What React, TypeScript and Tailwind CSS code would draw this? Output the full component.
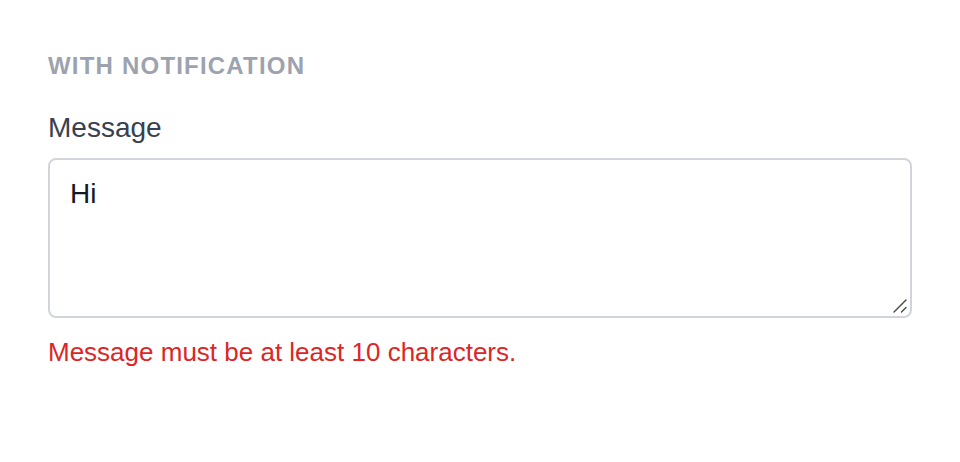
import { useState } from 'react';

export default function App() {
  const [message, setMessage] = useState('Hi');
  const tooShort = message.trim().length < 10;

  return (
    <div className="min-h-screen bg-white px-12 pt-[50px] font-['Liberation_Sans',Arial,sans-serif]">
      <h2 className="text-[24px] font-bold uppercase leading-[32px] tracking-[0.05em] text-[#9ca3af]">
        With notification
      </h2>

      <label htmlFor="message" className="mt-[28px] block text-[28px] leading-[36px] text-[#374151]">
        Message
      </label>
      <div className="relative mt-[12px]">
        <textarea
          id="message"
          value={message}
          onChange={(e) => setMessage(e.target.value)}
          className="block h-[160px] w-full resize-none rounded-[8px] border-2 border-[#d1d5db] px-5 py-[14px] text-[28px] leading-[40px] text-[#111827] outline-none"
        />
        {/* resize grip */}
        <svg
          className="pointer-events-none absolute bottom-[4px] right-[4px] h-[16px] w-[16px]"
          viewBox="0 0 16 16"
          fill="none"
          stroke="#4b4b4b"
          strokeWidth={1.5}
          strokeLinecap="round"
        >
          <path d="M2 14L14 2" />
          <path d="M9.5 14L14 9.5" />
        </svg>
      </div>

      {tooShort && (
        <p className="mt-[16px] text-[26px] leading-[36px] text-[#dc2626]">
          Message must be at least 10 characters.
        </p>
      )}
    </div>
  );
}
